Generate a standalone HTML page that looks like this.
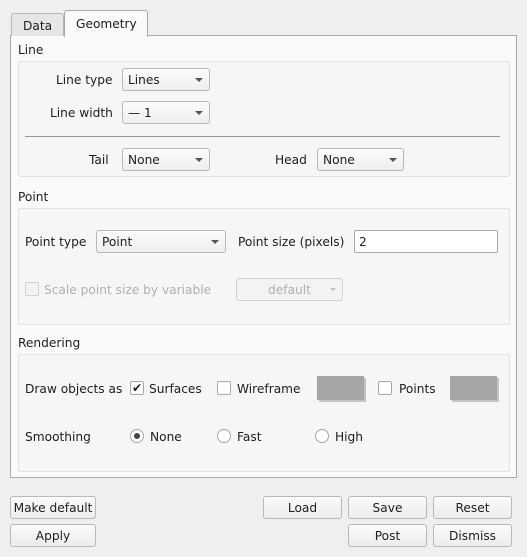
<!DOCTYPE html>
<html><head><meta charset="utf-8"><style>
*{box-sizing:border-box}
body{margin:0;width:527px;height:557px;background:#efefef;font-family:"DejaVu Sans","Liberation Sans",sans-serif;font-size:12.2px;color:#202020;position:relative;overflow:hidden}
.a{position:absolute}
.t{position:absolute;white-space:nowrap;line-height:16px;margin-top:0px}
.tab{position:absolute;border:1px solid #b4b4b4;border-bottom:none;border-radius:3px 3px 0 0}
.panel{position:absolute;left:10px;top:35px;width:507px;height:443px;background:#fafafa;border:1px solid #a8a8a8}
.grp{position:absolute;left:18px;width:492px;background:#f6f6f6;border:1px solid #e2e2e2;border-radius:2px}
.cb{position:absolute;height:23px;border:1px solid #b8b8b8;border-radius:3px;background:linear-gradient(#fbfbfb,#efefef);padding-left:5px;line-height:22px;white-space:nowrap}
.cb::after{content:"";position:absolute;right:6px;top:9px;border-left:4px solid transparent;border-right:4px solid transparent;border-top:4px solid #555}
.btn{position:absolute;height:23px;border:1px solid #b8b8b8;border-radius:3px;background:linear-gradient(#fbfbfb,#ececec);text-align:center;line-height:22px;white-space:nowrap}
.chk{position:absolute;width:14px;height:14px;border:1px solid #a8a8a8;background:#fff;border-radius:2px}
.rad{position:absolute;width:14px;height:14px;border:1px solid #a8a8a8;background:#fff;border-radius:50%}
.sw{position:absolute;width:47px;height:24px;background:#a6a6a6;box-shadow:2px 2px 0 #c4c4c4}
</style></head><body>
<div class="panel"></div>
<div class="tab" style="left:11px;top:13px;width:53px;height:23px;background:#e6e6e6"><div class="t" style="left:11px;top:4px">Data</div></div>
<div class="tab" style="left:64px;top:10px;width:84px;height:27px;background:#fafafa;border-color:#a8a8a8"><div class="t" style="left:11px;top:5px">Geometry</div></div>

<div class="t" style="left:18px;top:42px">Line</div>
<div class="grp" style="top:61px;height:116px"></div>
<div class="t" style="left:56px;top:72px">Line type</div>
<div class="cb" style="left:122px;top:68px;width:88px">Lines</div>
<div class="t" style="left:50px;top:105px">Line width</div>
<div class="cb" style="left:122px;top:101px;width:88px">— 1</div>
<div class="a" style="left:25px;top:136px;width:475px;height:1px;background:#999"></div>
<div class="t" style="left:89px;top:152px">Tail</div>
<div class="cb" style="left:122px;top:148px;width:88px">None</div>
<div class="t" style="left:275px;top:152px">Head</div>
<div class="cb" style="left:317px;top:148px;width:87px">None</div>

<div class="t" style="left:18px;top:189px">Point</div>
<div class="grp" style="top:208px;height:117px"></div>
<div class="t" style="left:25px;top:234px">Point type</div>
<div class="cb" style="left:96px;top:230px;width:130px">Point</div>
<div class="t" style="left:238px;top:234px">Point size (pixels)</div>
<div class="a" style="left:354px;top:230px;width:144px;height:23px;background:#fff;border:1px solid #aaa;border-radius:2px;padding-left:4px;line-height:22px">2</div>
<div class="chk" style="left:25px;top:282px;background:#f2f2f2;border-color:#d0d0d0"></div>
<div class="t" style="left:44px;top:282px;color:#b0b0b0">Scale point size by variable</div>
<div class="btn" style="left:236px;top:278px;width:107px;color:#b0b0b0;border-color:#d0d0d0;background:#f3f3f3">default<div class="a" style="right:6px;top:9px;border-left:3px solid transparent;border-right:3px solid transparent;border-top:3px solid #c0c0c0"></div></div>

<div class="t" style="left:18px;top:335px">Rendering</div>
<div class="grp" style="top:354px;height:118px"></div>
<div class="t" style="left:25px;top:381px">Draw objects as</div>
<div class="chk" style="left:130px;top:381px"></div>
<div class="t" style="left:132px;top:380px">✔</div>
<div class="t" style="left:149px;top:381px">Surfaces</div>
<div class="chk" style="left:217px;top:381px"></div>
<div class="t" style="left:237px;top:381px">Wireframe</div>
<div class="sw" style="left:317px;top:376px"></div>
<div class="chk" style="left:378px;top:381px"></div>
<div class="t" style="left:399px;top:381px">Points</div>
<div class="sw" style="left:450px;top:376px"></div>
<div class="t" style="left:25px;top:429px">Smoothing</div>
<div class="rad" style="left:130px;top:429px"><div class="a" style="left:3px;top:3px;width:6px;height:6px;border-radius:50%;background:#444"></div></div>
<div class="t" style="left:150px;top:429px">None</div>
<div class="rad" style="left:217px;top:429px"></div>
<div class="t" style="left:237px;top:429px">Fast</div>
<div class="rad" style="left:315px;top:429px"></div>
<div class="t" style="left:335px;top:429px">High</div>

<div class="btn" style="left:10px;top:496px;width:86px">Make default</div>
<div class="btn" style="left:10px;top:524px;width:86px">Apply</div>
<div class="btn" style="left:263px;top:496px;width:79px">Load</div>
<div class="btn" style="left:348px;top:496px;width:79px">Save</div>
<div class="btn" style="left:433px;top:496px;width:79px">Reset</div>
<div class="btn" style="left:348px;top:524px;width:79px">Post</div>
<div class="btn" style="left:433px;top:524px;width:79px">Dismiss</div>
</body></html>
